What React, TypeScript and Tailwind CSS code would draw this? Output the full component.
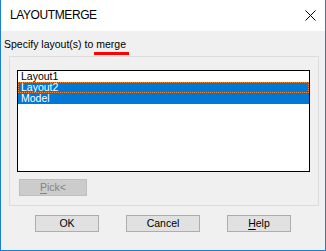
export default function App() {
  const items = [
    { name: 'Layout1', selected: false, focused: false },
    { name: 'Layout2', selected: true, focused: true },
    { name: 'Model', selected: true, focused: false },
  ]

  return (
    <div className="w-[326px] h-[251px] bg-[#f0f0f0] border-x border-b border-[#1a7fd6] flex flex-col font-['Liberation_Sans',Arial,sans-serif] text-black">
      {/* Title bar */}
      <div className="h-[31px] shrink-0 bg-white flex items-center justify-between pl-[9px] pr-[9px]">
        <span className="text-[12px] leading-[31px] tracking-[-0.4px]">LAYOUTMERGE</span>
        <svg width="11" height="11" viewBox="0 0 11 11">
          <path d="M0.5 0.5 L10.5 10.5 M10.5 0.5 L0.5 10.5" stroke="#000" strokeWidth="1" fill="none" />
        </svg>
      </div>

      {/* Prompt */}
      <div className="relative mt-[7px] h-[12px] pl-[3px] text-[10.5px] leading-[12px]">
        Specify layout(s) to merge
        <div className="absolute left-[93px] top-[14px] w-[35px] h-[3px] bg-[#ff0000]" />
      </div>

      {/* Group box */}
      <div className="mt-[6px] ml-[8px] w-[310px] h-[150px] border border-[#dcdcdc] flex flex-col">
        <div className="mt-[13px] ml-[7px] w-[293px] h-[102px] border border-black bg-white">
          {items.map((item) => (
            <div
              key={item.name}
              className={
                'h-[11px] flex items-center overflow-hidden text-[10.5px] leading-none ' +
                (item.selected ? 'bg-[#0078d7] text-white ' : '') +
                (item.focused ? 'border border-dotted border-[#ff8728] pl-[2px]' : 'pl-[3px]')
              }
            >
              {item.name}
            </div>
          ))}
        </div>

        <button className="mt-[7px] ml-[9px] w-[68px] h-[17px] border border-[#bfbfbf] bg-[#cccccc] text-[#838383] text-[10.5px] leading-none flex items-center justify-center">
          <span className="underline underline-offset-[2px]">P</span>ick&lt;
        </button>
      </div>

      {/* Buttons */}
      <div className="mt-[9px] ml-[34px] flex gap-[27px] text-[10.5px]">
        <button className="w-[64px] h-[17px] border border-[#adadad] bg-[#e1e1e1] leading-none flex items-center justify-center">
          OK
        </button>
        <button className="w-[74px] h-[17px] border border-[#adadad] bg-[#e1e1e1] leading-none flex items-center justify-center">
          Cancel
        </button>
        <button className="w-[64px] h-[17px] border border-[#adadad] bg-[#e1e1e1] leading-none flex items-center justify-center">
          <span className="underline underline-offset-[2px]">H</span>elp
        </button>
      </div>
    </div>
  )
}
